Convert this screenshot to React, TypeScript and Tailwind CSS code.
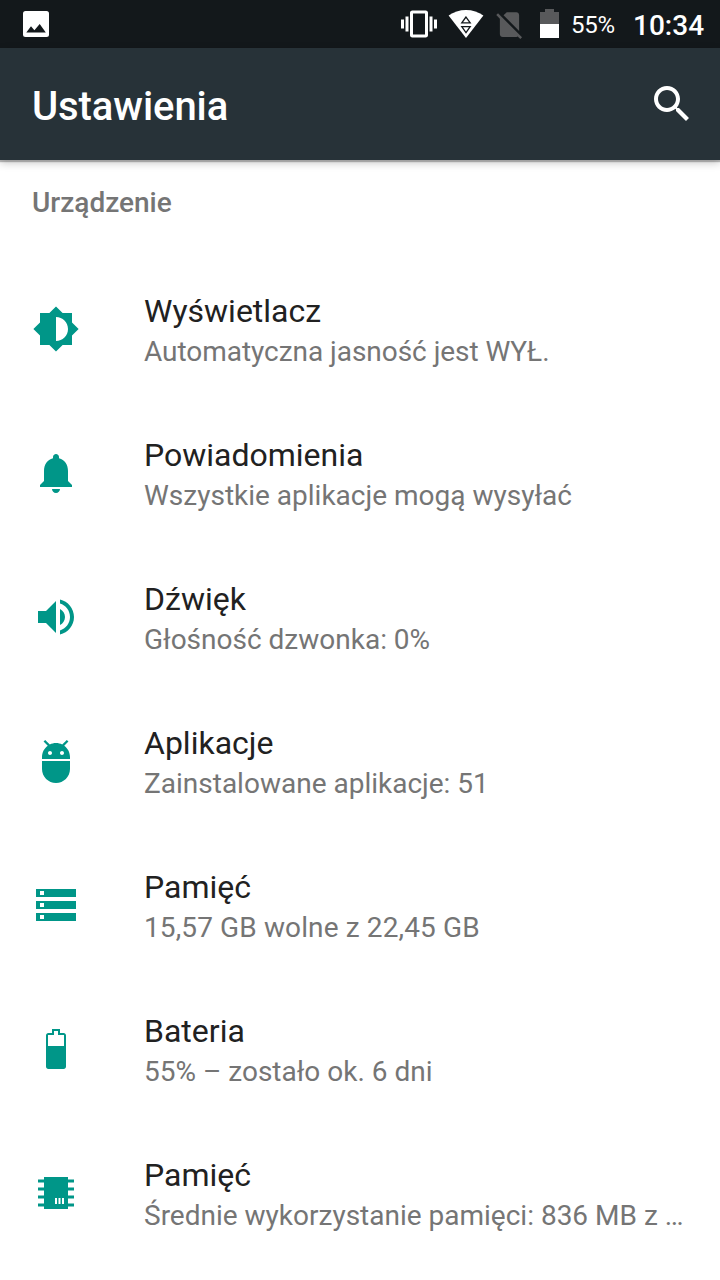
import React from 'react';

interface SettingsItem {
  title: string;
  summary: string;
  icon: string;
  summaryClass?: string;
}

const ITEMS: SettingsItem[] = [
  {
    title: 'Wyświetlacz',
    summary: 'Automatyczna jasność jest WYŁ.',
    icon: 'M20 15.31L23.31 12 20 8.69V4h-4.69L12 .69 8.69 4H4v4.69L.69 12 4 15.31V20h4.69L12 23.31 15.31 20H20v-4.69zM12 18V6c3.31 0 6 2.69 6 6s-2.69 6-6 6z',
    summaryClass: 'tracking-[-0.04px]',
  },
  {
    title: 'Powiadomienia',
    summary: 'Wszystkie aplikacje mogą wysyłać',
    icon: 'M12 22c1.1 0 2-.9 2-2h-4c0 1.1.89 2 2 2zm6-6v-5c0-3.07-1.64-5.64-4.5-6.32V4c0-.83-.67-1.5-1.5-1.5s-1.5.67-1.5 1.5v.68C7.63 5.36 6 7.92 6 11v5l-2 2v1h16v-1l-2-2z',
  },
  {
    title: 'Dźwięk',
    summary: 'Głośność dzwonka: 0%',
    icon: 'M3 9v6h4l5 5V4L7 9H3zm13.5 3c0-1.77-1.02-3.29-2.5-4.03v8.05c1.48-.73 2.5-2.25 2.5-4.02zM14 3.23v2.06c2.89.86 5 3.54 5 6.71s-2.11 5.85-5 6.71v2.06c4.01-.91 7-4.49 7-8.77s-2.99-7.86-7-8.77z',
  },
  {
    title: 'Aplikacje',
    summary: 'Zainstalowane aplikacje: 51',
    icon: 'M5 16c0 3.87 3.13 7 7 7s7-3.13 7-7v-4H5v4zM16.12 4.37l2.1-2.1-.82-.83-2.3 2.31C14.16 3.28 13.12 3 12 3s-2.16.28-3.09.75L6.6 1.44l-.82.83 2.1 2.1C6.14 5.64 5 7.68 5 10v1h14v-1c0-2.32-1.14-4.36-2.88-5.63zM9 9c-.55 0-1-.45-1-1s.45-1 1-1 1 .45 1 1-.45 1-1 1zm6 0c-.55 0-1-.45-1-1s.45-1 1-1 1 .45 1 1-.45 1-1 1z',
  },
  {
    title: 'Pamięć',
    summary: '15,57 GB wolne z 22,45 GB',
    icon: 'M2 20h20v-4H2v4zm2-3h2v2H4v-2zM2 4v4h20V4H2zm4 3H4V5h2v2zm-4 7h20v-4H2v4zm2-3h2v2H4v-2z',
    summaryClass: 'tracking-[0.12px]',
  },
  {
    title: 'Bateria',
    summary: '55% – zostało ok. 6 dni',
    icon: 'M15.8 4H14V2h-4v2H8.2C7.5 4 7 4.5 7 5.2v15.6c0 .7.5 1.2 1.2 1.2h7.6c.7 0 1.2-.5 1.2-1.2V5.2c0-.7-.5-1.2-1.2-1.2zM16 10.5H8V5h3V3h2v2h3v5.5z',
  },
  {
    title: 'Pamięć',
    summary: 'Średnie wykorzystanie pamięci: 836 MB z …',
    icon: 'M6 4h12v1.25h3v1.5h-3v2.5h3v1.5h-3v2.5h3v1.5h-3v2.5h3v1.5h-3V20H6v-1.25H3v-1.5h3v-2.5H3v-1.5h3v-2.5H3v-1.5h3v-2.5H3v-1.5h3zM11.5 14.5v3h1v-3zM13.25 14.5v3h1v-3zM15 14.5v3h1v-3z',
  },
];

const StatusBar: React.FC = () => (
  <div className="flex h-12 items-center bg-[#13181b] pr-4 pl-[23px] text-white">
    <svg width="26" height="26" viewBox="0 0 26 26">
      <rect width="26" height="26" rx="2.5" fill="#fff" />
      <path d="M3.3 21.5L8 15.3l3.4 4 5.3-6.3 6.1 8.5z" fill="#13181b" />
    </svg>

    {/* Vibrate */}
    <svg className="ml-auto" width="36" height="36" viewBox="0 0 24 24" fill="#fff">
      <path d="M0 15h2V9H0v6zm3 2h2V7H3v10zm19-8v6h2V9h-2zm-3 8h2V7h-2v10zM16.5 3h-9C6.67 3 6 3.67 6 4.5v15c0 .83.67 1.5 1.5 1.5h9c.83 0 1.5-.67 1.5-1.5v-15c0-.83-.67-1.5-1.5-1.5zM16 19H8V5h8v14z" />
    </svg>

    {/* Wi-Fi with activity arrows */}
    <svg className="ml-[11px]" width="36" height="28" viewBox="0 0 36 28">
      <path d="M18 28L.6 5.6C5.5 2 11.5 0 18 0s12.5 2 17.4 5.6z" fill="#fff" />
      <path d="M18 7l-4.2 5.9h8.4zM18 22.6l-4.2-5.9h8.4z" fill="#fff" stroke="#13181b" strokeWidth="1.3" />
    </svg>

    {/* No SIM */}
    <svg className="ml-[9px]" width="33" height="33" viewBox="0 0 24 24" fill="#58595b">
      <path d="M18.99 5c0-1.1-.89-2-1.99-2h-7L7.66 5.34 19 16.68 18.99 5zM3.65 3.88L2.38 5.15 5 7.77V19c0 1.1.9 2 2 2h10.01c.35 0 .67-.1.96-.26l1.88 1.88 1.27-1.27L3.65 3.88z" />
    </svg>

    <svg className="mb-px ml-[14px]" width="19" height="29" viewBox="0 0 19 29">
      <path d="M5 0h9v3h5v12H0V3h5z" fill="#58595b" />
      <path d="M0 15h19v14H0z" fill="#fff" />
    </svg>
    <span className="ml-3 w-[43px] pt-0.5 text-2xl tracking-[-0.3px] whitespace-nowrap">55%</span>
    <span className="ml-[19px] w-[71px] pt-[3px] text-[28px] leading-8 font-medium whitespace-nowrap">10:34</span>
  </div>
);

const AppBar: React.FC = () => (
  <div className="relative flex h-28 items-center justify-between bg-[#273238] pr-6 pl-8 shadow-[0_2px_1px_rgba(0,0,0,0.25),0_3px_8px_rgba(0,0,0,0.22)]">
    <h1 className="pt-1.5 text-[40px] leading-[48px] font-medium tracking-[-0.08px] text-white">Ustawienia</h1>
    <svg width="48" height="48" viewBox="0 0 24 24" fill="#fff">
      <path d="M15.5 14h-.79l-.28-.27C15.41 12.59 16 11.11 16 9.5 16 5.91 13.09 3 9.5 3S3 5.91 3 9.5 5.91 16 9.5 16c1.61 0 3.09-.59 4.23-1.57l.27.28v.79l5 4.99L20.49 19l-4.99-5zm-6 0C7.01 14 5 11.99 5 9.5S7.01 5 9.5 5 14 7.01 14 9.5 11.99 14 9.5 14z" />
    </svg>
  </div>
);

const SettingsRow: React.FC<{ item: SettingsItem }> = ({ item }) => (
  <li className="flex h-36 items-center pr-8 pl-8">
    <svg className="shrink-0" width="48" height="48" viewBox="0 0 24 24" fill="#009688" fillRule="evenodd">
      <path d={item.icon} />
    </svg>
    <div className="ml-16 min-w-0 flex-1 pt-[3px] whitespace-nowrap">
      <p className="text-[32px] leading-[42px] text-[#212121]">{item.title}</p>
      <p className={`mt-px text-[28px] leading-[38px] text-[#757575] ${item.summaryClass || ''}`}>{item.summary}</p>
    </div>
  </li>
);

const App: React.FC = () => {
  return (
    <div className="h-[1280px] w-[720px] overflow-hidden bg-white font-['Roboto',sans-serif]">
      <StatusBar />
      <AppBar />
      <h2 className="flex h-[97px] items-start px-8 pt-[27px] text-[28px] leading-8 font-medium text-[#757575]">
        Urządzenie
      </h2>
      <ul>
        {ITEMS.map((item, index) => (
          <SettingsRow key={index} item={item} />
        ))}
      </ul>
    </div>
  );
};

export default App;
